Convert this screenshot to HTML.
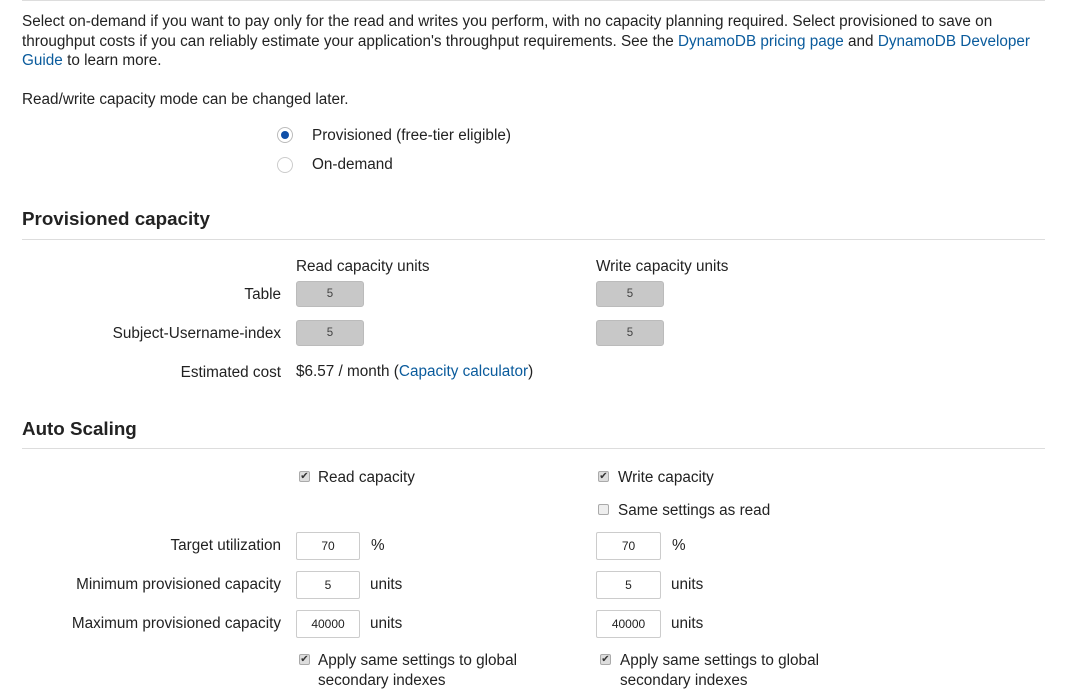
<!DOCTYPE html>
<html><head><style>
body{margin:0;width:1080px;height:700px;background:#fff;font-family:"Liberation Sans",Arial,sans-serif;font-size:15.3px;color:#222;position:relative;overflow:hidden}
.a{position:absolute;white-space:nowrap;line-height:20px}
.r{text-align:right}
a{color:#0a5b9c;text-decoration:none}
h2{position:absolute;margin:0;font-size:18.8px;font-weight:bold;color:#222;line-height:24px}
.hr{position:absolute;left:22px;width:1023px;height:1px;background:#ddd}
.g{position:absolute;width:68px;height:26px;background:#c8c8c8;border:1px solid #bbb;border-radius:3px;box-sizing:border-box;font-size:11.5px;text-align:center;line-height:25px;color:#444}
.i{position:absolute;height:28px;background:#fff;border:1px solid #ccc;border-radius:2px;box-sizing:border-box;font-size:12px;text-align:center;line-height:26px;color:#222}
.cb{position:absolute;width:11px;height:11px;border:1px solid #aaa;border-radius:2px;background:#ddd;box-sizing:border-box;font-size:10px;line-height:9px;text-align:center;color:#333}
.rd{position:absolute;width:16px;height:16px;border-radius:50%;border:1px solid #ccc;box-sizing:border-box;background:#fff}
</style></head><body>
<div class="hr" style="top:0"></div>
<div class="a" style="left:22px;top:12px">Select on-demand if you want to pay only for the read and writes you perform, with no capacity planning required. Select provisioned to save on</div>
<div class="a" style="left:22px;top:32px">throughput costs if you can reliably estimate your application's throughput requirements. See the <a>DynamoDB pricing page</a> and <a>DynamoDB Developer</a></div>
<div class="a" style="left:22px;top:51px"><a>Guide</a> to learn more.</div>
<div class="a" style="left:22px;top:90px">Read/write capacity mode can be changed later.</div>
<div class="rd" style="left:277px;top:127px;border-color:#bbb"><div style="position:absolute;left:3px;top:3px;width:8px;height:8px;border-radius:50%;background:#0f4fa8"></div></div>
<div class="a" style="left:312px;top:126px">Provisioned (free-tier eligible)</div>
<div class="rd" style="left:277px;top:157px"></div>
<div class="a" style="left:312px;top:155px">On-demand</div>
<h2 style="left:22px;top:207px">Provisioned capacity</h2>
<div class="hr" style="top:239px"></div>
<div class="a" style="left:296px;top:257px">Read capacity units</div>
<div class="a" style="left:596px;top:257px">Write capacity units</div>
<div class="a r" style="right:799px;top:285px">Table</div>
<div class="g" style="left:296px;top:281px">5</div>
<div class="g" style="left:596px;top:281px">5</div>
<div class="a r" style="right:799px;top:324px">Subject-Username-index</div>
<div class="g" style="left:296px;top:320px">5</div>
<div class="g" style="left:596px;top:320px">5</div>
<div class="a r" style="right:799px;top:363px">Estimated cost</div>
<div class="a" style="left:296px;top:362px">$6.57 / month (<a>Capacity calculator</a>)</div>
<h2 style="left:22px;top:417px">Auto Scaling</h2>
<div class="hr" style="top:448px"></div>
<div class="cb" style="left:299px;top:471px">✔</div>
<div class="a" style="left:318px;top:468px">Read capacity</div>
<div class="cb" style="left:598px;top:471px">✔</div>
<div class="a" style="left:618px;top:468px">Write capacity</div>
<div class="cb" style="left:598px;top:504px;background:#eee"></div>
<div class="a" style="left:618px;top:501px">Same settings as read</div>
<div class="a r" style="right:799px;top:536px">Target utilization</div>
<div class="i" style="left:296px;top:532px;width:64px">70</div><div class="a" style="left:371px;top:536px">%</div>
<div class="i" style="left:596px;top:532px;width:65px">70</div><div class="a" style="left:672px;top:536px">%</div>
<div class="a r" style="right:799px;top:575px">Minimum provisioned capacity</div>
<div class="i" style="left:296px;top:571px;width:64px">5</div><div class="a" style="left:370px;top:575px">units</div>
<div class="i" style="left:596px;top:571px;width:65px">5</div><div class="a" style="left:671px;top:575px">units</div>
<div class="a r" style="right:799px;top:614px">Maximum provisioned capacity</div>
<div class="i" style="left:296px;top:610px;width:64px">40000</div><div class="a" style="left:370px;top:614px">units</div>
<div class="i" style="left:596px;top:610px;width:65px">40000</div><div class="a" style="left:671px;top:614px">units</div>
<div class="cb" style="left:299px;top:654px">✔</div>
<div class="a" style="left:318px;top:651px">Apply same settings to global<br>secondary indexes</div>
<div class="cb" style="left:600px;top:654px">✔</div>
<div class="a" style="left:620px;top:651px">Apply same settings to global<br>secondary indexes</div>
</body></html>
